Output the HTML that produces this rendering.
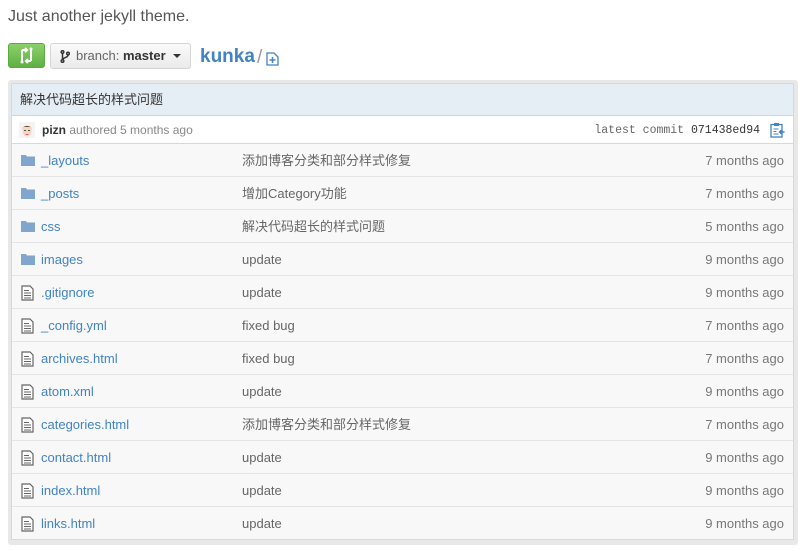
<!DOCTYPE html>
<html><head><meta charset="utf-8"><style>
body{margin:0;width:806px;height:551px;background:#fff;font-family:"Liberation Sans","Noto Sans CJK SC",sans-serif;position:relative;overflow:hidden}
.a{position:absolute}
.desc{left:8px;top:8px;font-size:16px;color:#555}
.gbtn{left:8px;top:43px;width:37px;height:25px;border-radius:3px;background:linear-gradient(#8cd06b,#60b044);border:1px solid #5ca941;box-sizing:border-box}
.bbtn{left:50px;top:43px;width:141px;height:26px;border-radius:3px;background:linear-gradient(#fafafa,#eaeaea);border:1px solid #d5d5d5;box-sizing:border-box;font-size:13px;color:#666;line-height:24px}
.kunka{left:200px;top:46px;font-size:19px;font-weight:bold;color:#4183c4}
.frame{left:8px;top:80px;width:790px;height:465px;background:#e8e8e8;border-radius:3px}
.inner{left:11px;top:83px;width:783px;height:457px;background:#f8f8f8;border:1px solid #d8d8d8;box-sizing:border-box}
.hdr{left:12px;top:84px;width:781px;height:32px;background:#e6eef5;border-bottom:1px solid #cad8e4;box-sizing:border-box;font-size:13px;color:#333;line-height:32px;padding-left:8px}
.auth{left:12px;top:116px;width:781px;height:28px;background:#fff;border-bottom:1px solid #d8d8d8;box-sizing:border-box;font-size:12px;line-height:29px}
.row{position:absolute;left:12px;width:781px;height:33px;border-bottom:1px solid #e5e5e5;box-sizing:border-box;font-size:13px;line-height:34px}
.row .n{position:absolute;left:29px;color:#4183c4}
.row .m{position:absolute;left:230px;color:#666}
.row .t{position:absolute;right:9px;color:#777}
.row svg{position:absolute;left:9px;top:10px}
</style></head><body>
<div class="a desc">Just another jekyll theme.</div>
<div class="a gbtn"><svg class="a" style="left:0;top:0" width="35" height="23" viewBox="0 0 35 23"><g fill="none" stroke="#fff" stroke-width="2"><path d="M13 6v11M22 6v11"/><path d="M13 6h4M22 17h-4"/><path d="M16 4l2 2-2 2M19 15l-2 2 2 2"/></g><circle cx="13" cy="18" r="1.5" fill="#fff"/><circle cx="22" cy="5" r="1.5" fill="#fff"/></svg></div>
<div class="a bbtn"><svg class="a" style="left:9px;top:6px" width="10" height="13" viewBox="0 0 10 13"><g fill="none" stroke="#333" stroke-width="1.5"><circle cx="2.5" cy="2" r="1.3"/><circle cx="2.5" cy="11" r="1.3"/><circle cx="8" cy="3.5" r="1.3"/><path d="M2.5 3.3v6.4M8 5c0 3-5 2-5.5 5"/></g></svg><span class="a" style="left:25px">branch: <b style="color:#333">master</b></span><span class="a" style="left:122px;top:10px;width:0;height:0;border-left:4px solid transparent;border-right:4px solid transparent;border-top:4px solid #333"></span></div>
<div class="a kunka">kunka</div>
<div class="a" style="left:257px;top:47px;font-size:19px;color:#999">/</div>
<svg class="a" style="left:266px;top:52px" width="13" height="14" viewBox="0 0 13 14"><path d="M1 1h7l4 4v8H1z" fill="#fff" stroke="#4183c4" stroke-width="1.3"/><path d="M6.5 5v6M3.5 8h6" stroke="#4183c4" stroke-width="1.5"/></svg>
<div class="a frame"></div>
<div class="a inner"></div>
<div class="a hdr">解决代码超长的样式问题</div>
<div class="a auth">
<svg class="a" style="left:7px;top:6px" width="16" height="16" viewBox="0 0 16 16"><rect width="16" height="16" fill="#f4f4f4"/><ellipse cx="8" cy="9" rx="4.5" ry="5.5" fill="#f3d6c3"/><path d="M3.5 7c0-4 9-4 9 0l-1-2h-7z" fill="#7a4a2a"/><rect x="5" y="8" width="2" height="1" fill="#555"/><rect x="9" y="8" width="2" height="1" fill="#555"/><path d="M6.5 12.5h3" stroke="#d66" stroke-width="1"/></svg>
<span class="a" style="left:30px"><b style="color:#333">pizn</b> <span style="color:#888">authored 5 months ago</span></span>
<span class="a" style="right:33px;font-family:'Liberation Mono',monospace;font-size:11.5px;color:#666">latest commit <span style="color:#333">071438ed94</span></span>
<svg class="a" style="right:8px;top:6px" width="15" height="16" viewBox="0 0 15 16"><rect x="1" y="2.5" width="11" height="12.5" fill="#fff" stroke="#4183c4" stroke-width="1.3"/><rect x="4" y="1" width="5" height="3" fill="#4183c4"/><path d="M3.5 7h5M3.5 9.5h3M3.5 12h5" stroke="#4183c4"/><path d="M14.5 10h-5M11.5 8l-2 2 2 2" fill="none" stroke="#4183c4" stroke-width="1.4"/></svg>
</div>
<div id="rows"></div>
<script>
var F='<svg width="14" height="12" viewBox="0 0 14 12"><path d="M0 1h5l1 1.5h8V12H0z" fill="#80a6cd"/></svg>';
var D='<svg width="13" height="16" viewBox="0 0 13 16" style="top:9px"><path d="M1 1h8l3 3v11H1z" fill="#fff" stroke="#666" stroke-width="1.2"/><path d="M3 5.5h5M3 8h7M3 10.5h7M3 13h7" stroke="#666" stroke-width="1"/></svg>';
var r=[[F,"_layouts","添加博客分类和部分样式修复","7 months ago"],[F,"_posts","增加Category功能","7 months ago"],[F,"css","解决代码超长的样式问题","5 months ago"],[F,"images","update","9 months ago"],[D,".gitignore","update","9 months ago"],[D,"_config.yml","fixed bug","7 months ago"],[D,"archives.html","fixed bug","7 months ago"],[D,"atom.xml","update","9 months ago"],[D,"categories.html","添加博客分类和部分样式修复","7 months ago"],[D,"contact.html","update","9 months ago"],[D,"index.html","update","9 months ago"],[D,"links.html","update","9 months ago"]];
var h="";r.forEach(function(x,i){h+='<div class="row" style="top:'+(144+i*33)+'px;'+(i==11?'border-bottom:none':'')+'">'+x[0]+'<span class="n">'+x[1]+'</span><span class="m">'+x[2]+'</span><span class="t">'+x[3]+'</span></div>';});
document.getElementById("rows").innerHTML=h;
</script>
</body></html>
